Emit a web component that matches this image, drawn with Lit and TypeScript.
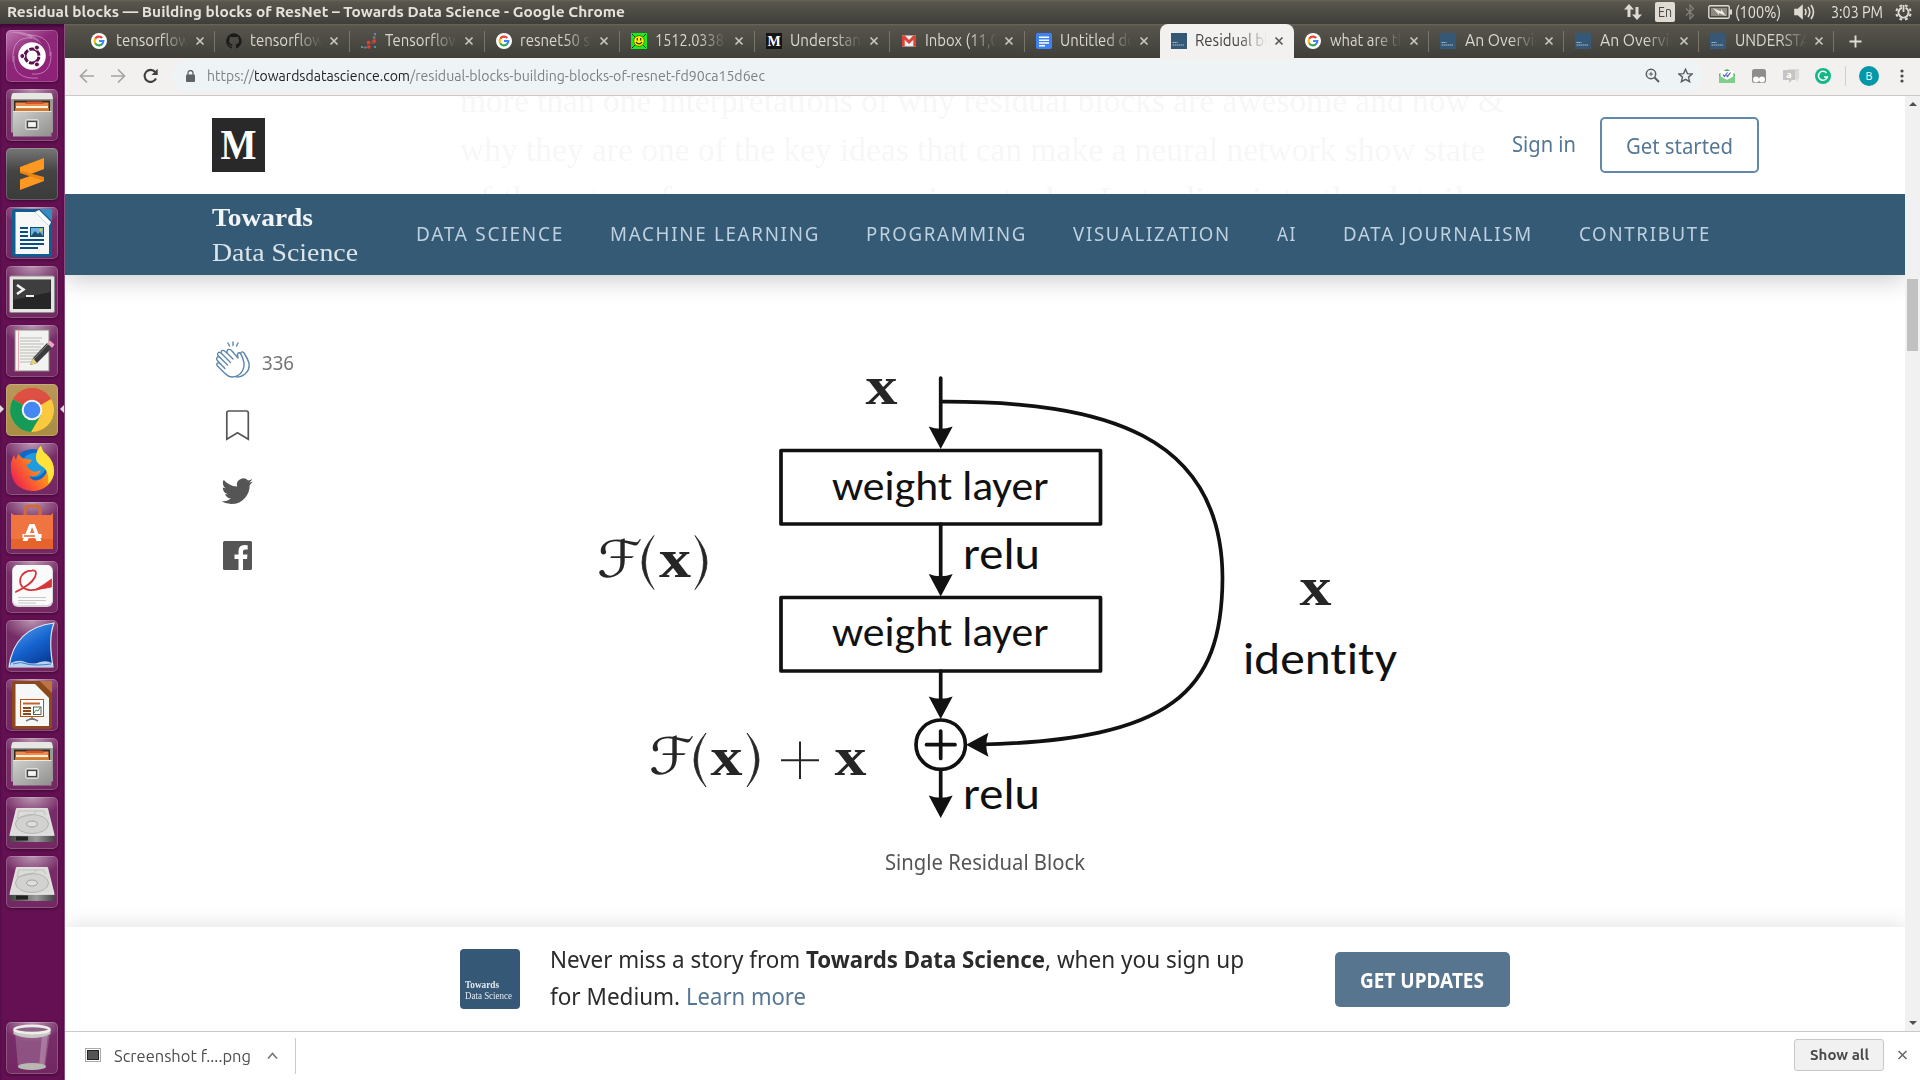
import { LitElement, html, css, svg, nothing } from "lit";
import { customElement, property } from "lit/decorators.js";

/** Single line of text condensed or expanded to a given advance width. */
@customElement("fit-text")
class FitText extends LitElement {
  @property({ type: Number }) w = 0;
  static styles = css`
    :host { display: inline-block; white-space: pre; flex: none; }
    .t { display: inline-block; transform-origin: 0 50%; white-space: pre; }
  `;
  render() {
    return html`<span class="t"><slot></slot></span>`;
  }
  firstUpdated() {
    const t = this.renderRoot.querySelector(".t") as HTMLElement;
    const n = t.offsetWidth ? t.getBoundingClientRect().width : this.w;
    this.style.width = this.w + "px";
    t.style.transform = `scaleX(${this.w / n})`;
  }
}

const fit = (text: string, w: number, cls = "") => html`<fit-text class=${cls} .w=${w}>${text}</fit-text>`;

const google = svg`<circle cx="8" cy="8" r="8" fill="#fff"/>
  <g fill="none" stroke-width="2.1"><path d="M4.2 5.8A4.4 4.4 0 0 1 11.2 5" stroke="#ea4335"/><path d="M4.3 10.4A4.6 4.6 0 0 1 4.3 5.6" stroke="#fbbc05"/><path d="M11.2 11A4.4 4.4 0 0 1 4.2 10.2" stroke="#34a853"/><path d="M8 8h4.4A4.4 4.4 0 0 1 10.9 11.2" stroke="#4285f4"/></g>`;
const tds = svg`<rect width="16" height="16" fill="#355876"/><path d="M1.5 9.5h5M1.5 12h12" stroke="#a9bccb" stroke-width="1" stroke-dasharray="1.6 .4"/>`;
const favicons: Record<string, unknown> = {
  google, tds,
  github: svg`<path fill="#1b1b1b" d="M8 .3a7.8 7.8 0 0 0-2.5 15.2c.4.1.5-.2.5-.4v-1.5c-2.1.5-2.6-.9-2.6-.9-.4-.9-.9-1.1-.9-1.1-.7-.5.1-.5.1-.5.8.1 1.2.8 1.2.8.7 1.2 1.8.8 2.3.6.1-.5.3-.8.5-1-1.7-.2-3.5-.9-3.5-3.9 0-.8.3-1.5.8-2.1-.1-.2-.4-1 .1-2.1 0 0 .6-.2 2.1.8a7.500 7.500 0 0 1 3.900 0c1.500-1 2.100-.8 2.100-.8.4 1.100.2 1.900.1 2.100.5.6.8 1.200.8 2.100 0 3-1.800 3.700-3.500 3.900.3.2.5.7.5 1.400v2.100c0 .2.1.5.5.4A7.800 7.800 0 0 0 8 .3z"/>`,
  mol: svg`<path d="M1 14.500h6M7 14v-4h7M14 10V1" stroke="#8a5650" stroke-width="1" fill="none"/><g fill="#e2412e"><circle cx="7.500" cy="9.500" r="1.800"/><circle cx="13" cy="8" r="1.800"/><circle cx="8" cy="14" r="1.700"/></g><g fill="#5e8ea3"><rect y="13" width="2" height="2"/><rect x="3.500" y="13.500" width="2" height="2"/><rect x="13" width="2" height="2"/><rect x="12" y="3.500" width="2" height="2"/><rect x="13" y="13" width="2" height="2"/></g>`,
  smile: svg`<rect width="16" height="16" fill="#10f01c"/><circle cx="8" cy="8" r="5.300" fill="#ffec00" stroke="#5c5c00" stroke-width=".8"/><path d="M6.300 5v2.500M9.700 5v2.500M5 9.200q3 3.500 6 0" stroke="#222" stroke-width="1.200" fill="none"/><path d="M1 1l3 3M15 1l-3 3M1 15l3-3M15 15l-3-3" stroke="#222"/>`,
  medium: svg`<rect width="16" height="16" fill="#141414"/><text x="8" y="13" text-anchor="middle" font-family="Liberation Serif, serif" font-weight="700" font-size="14" fill="#fff">M</text>`,
  gmail: svg`<path d="M1 2.500h14v11H1z" fill="#eee"/><path d="M1 13.500v-11h2.800L8 7l4.200-4.500H15v11h-2.700V6.800L8 11 3.700 6.800v6.700z" fill="#db4437"/>`,
  docs: svg`<rect width="16" height="16" rx="2" fill="#3f82f5"/><path d="M3 4.200h10M3 7.200h10M3 10h10M3 12.800h6" stroke="#fff" stroke-width="1.500"/>`,
};

interface Tab { icon: string; label: string; w: number; active?: boolean }
const tabs: Tab[] = [
  { icon: "google", label: "tensorflow", w: 74 },
  { icon: "github", label: "tensorflow", w: 74 },
  { icon: "mol", label: "Tensorflow", w: 75 },
  { icon: "google", label: "resnet50 s", w: 70 },
  { icon: "smile", label: "1512.03385", w: 77 },
  { icon: "medium", label: "Understan", w: 71 },
  { icon: "gmail", label: "Inbox (11,0", w: 74 },
  { icon: "docs", label: "Untitled do", w: 76 },
  { icon: "tds", label: "Residual bl", w: 73, active: true },
  { icon: "google", label: "what are th", w: 76 },
  { icon: "tds", label: "An Overvie", w: 78 },
  { icon: "tds", label: "An Overvie", w: 78 },
  { icon: "tds", label: "UNDERSTA", w: 75 },
];

const files = svg`
  <path d="M6 5.500q0-1.500 1.500-1.500h37q1.500 0 1.500 1.500l1 5v33H5v-33z" fill="#9a9a96"/><path d="M6 5l1.500-1h37L46 5l1 5H5z" fill="#e6e6e3"/>
  <path d="M8 11.500h36V22H8z" fill="#3a2a22"/><path d="M9.500 13.500h33V22h-33z" fill="#f08a4b"/><path d="M21 12.500h15l2 2.500H19z" fill="#d2552a"/><path d="M10 17h32v2H10z" fill="#fff2e0"/><path d="M9 19.500h34V22H9z" fill="#cf7a2c"/>
  <path d="M7 22h38.500v25.500H7z" fill="url(#gFile)"/><path d="M7 22.500h38.500" stroke="#e8e8e8"/>
  <rect x="19.500" y="30.500" width="13" height="10" rx="1.500" fill="#b3b3b0" stroke="#dcdcda"/><rect x="21.500" y="32.500" width="9" height="6" fill="#f4f4f4" stroke="#444" stroke-width="1.200"/>`;
const disk = svg`
  <path d="M10.500 11.500h31L48 37.500H4z" fill="#dcdcda" stroke="#f1f1ef" stroke-width=".8"/>
  <ellipse cx="26" cy="27" rx="16.500" ry="9.500" fill="#d2d2d0" stroke="#aaaaa7" stroke-width=".8"/><ellipse cx="26" cy="27" rx="5.500" ry="3" fill="#dededc" stroke="#a2a2a0"/>
  <path d="M12.500 14h25l2 4M13 14l-2 7 15-3 5-4" fill="none" stroke="#b4b4b1" stroke-width=".7"/>
  <path d="M3.500 38h45v6q0 1-1 1h-43q-1 0-1-1z" fill="url(#gDisk)"/><path d="M3.500 38.300h45" stroke="#eee"/><rect x="10" y="39.500" width="12" height="4" fill="#222"/>`;
const launcher: { bg?: string; art: unknown; on?: boolean }[] = [
  { bg: "dash", art: svg`<g fill="none" stroke="#e9b9df" opacity=".55"><path d="M26 8Q5 6 7 32M26 44Q46 46 45 22M44 26Q46 5 22 5M8 26Q6 50 32 48"/></g><path d="M4 2Q26 0 36 14 20 4 4 2z" fill="#fff" opacity=".25"/>
     <circle cx="26" cy="26" r="13.800" fill="#fff"/><circle cx="26" cy="26" r="7" fill="none" stroke="#5d1150" stroke-width="3" stroke-dasharray="13.200 1.460" transform="rotate(6 26 26)"/>
     <g fill="#5d1150" stroke="#fff" stroke-width="1"><circle cx="16.300" cy="26" r="2.500"/><circle cx="30.900" cy="17.600" r="2.500"/><circle cx="30.900" cy="34.400" r="2.500"/></g>` },
  { art: files },
  { bg: "dark", art: svg`<path d="M38 10v11l-13 5 13 3.500V33L14 42V31.500L27 27l-13-4V19z" fill="#ff9820"/><path d="M14 22.500L38 29v4l-24-8z" fill="#ea860f"/>` },
  { art: svg`<path d="M8 2h26l12 12v33q0 3-3 3H9q-3 0-3-3V5q0-3 2-3z" fill="#0d5f92"/><path d="M34 2h12v12z" fill="#2f8fc4"/><path d="M9.500 5H29l14 14v28H9.500z" fill="#f7f7f7"/><path d="M29 5l14 14 2-4L33 3z" fill="#fff"/>
     <path d="M14 21h8M14 25h8M14 29h8M14 33h24M14 37h24M14 41h18" stroke="#0a4f7c" stroke-width="1.800"/><rect x="24.500" y="20.500" width="13" height="9" fill="#6db5dd" stroke="#0a4f7c"/><path d="M25 29l4-5 3 3 2-2 3 4z" fill="#24506c"/><circle cx="35" cy="23" r="1.500" fill="#f5c52f"/>` },
  { art: svg`<rect x="3.500" y="10" width="45" height="36.500" rx="1.500" fill="#e4e4e2" stroke="#8d8d8d"/><rect x="7" y="13.500" width="38" height="29.500" fill="#262626"/><path d="M7.500 14h37v12l-37 8z" fill="#3e3e3e"/><path d="M11 19l6.500 4.500L11 28" fill="none" stroke="#f2f2f2" stroke-width="2.600"/><path d="M20 30h8" stroke="#f2f2f2" stroke-width="2"/>` },
  { art: svg`<rect x="9" y="5" width="34" height="41" fill="#f2f2f0" stroke="#8a8a86"/><path d="M14 13h22M14 16h20M14 19h24M14 22h21M14 25h23M14 28h19M14 31h20M14 34h16M14 37h12" stroke="#b9b9b6" stroke-width="1"/><path d="M12.500 5v41" stroke="#eaa"/>
     <path d="M24 40l3-7L41 18l5 5-15 15z" fill="#3c3c3c"/><path d="M24 40l3-7 4 5z" fill="#e9d27c"/><path d="M41 18l3-2.500 4.500 4L46 23z" fill="#eda4c4"/><path d="M28 34L42 19" stroke="#8b8b8b"/>` },
  { bg: "gold", on: true, art: svg`<circle cx="26" cy="26" r="22" fill="#fbc93d"/><path d="M26 26L7 15A22 22 0 0 1 45 15z" fill="#e04b3d"/><path d="M7 15A22 22 0 0 0 25 48L35 31z" fill="#169a58"/><path d="M7 15A22 22 0 0 1 45 15H26z" fill="#dd5144"/><circle cx="26" cy="26" r="10.300" fill="#f4f4f4"/><circle cx="26" cy="26" r="8.300" fill="#4587f3"/>` },
  { art: svg`<circle cx="27" cy="26" r="20" fill="#1467c4"/><circle cx="28" cy="22" r="12" fill="#1f9be0"/><path d="M30 14Q31 6 35 3q1 5 5 8 8 7 8 17a21 20 0 0 1-22 20Q6 46 5 27q-1-9 3-15l2 5q1-5 3-6 2 5 8 5l5 1q-2 4-6 5 2 4 6 6 4 2 9-1-3 8-12 6 4 7 12 3 8-5 6-15-2-6-7-7z" fill="url(#gFox)"/><path d="M35 3q1 5 5 8 8 7 8 17 0 8-6 13 2-14-8-19-5-4-4-9 1-7 5-10z" fill="#ffe33b"/>` },
  { art: svg`<path d="M19 17V9q0-5 4-5h7q4 0 4 5v8" fill="none" stroke="#cf6a3b" stroke-width="3"/><path d="M5 11l3 2h37l2-2v36H5z" fill="#ef7440"/><path d="M5 37h42v10H5z" fill="#e6632c"/><path d="M23.500 22h5l7 17h-5l-1.500-3.500h-6L21.500 39h-5z" fill="#fff"/><path d="M24 31l2-6 2.500 6z" fill="#ef7440"/><path d="M16.500 32h19v4h-19z" fill="#fff"/><path d="M18 34h11" stroke="#e6632c" stroke-width="1.500"/>` },
  { art: svg`<rect x="6" y="4" width="41" height="42" rx="6" fill="#d8d8d6"/><rect x="7" y="4" width="39" height="40" rx="5" fill="#fafafa"/><path d="M9.500 31Q25 24 29 16 32 9 26 9.500 17 10 14.500 17 12.500 27 23 29 34 30 45 22" fill="none" stroke="#d3353a" stroke-width="1.800"/><path d="M9 31.500Q14 29 18 26.500M30 28Q38 24 45.500 18v8Q38 28 30 28z" fill="#d6353a" stroke="#d6353a" stroke-width=".8"/><path d="M12 36.500h28M12 39.500h28M12 42h18" stroke="#c2c2c2" stroke-width=".9"/>` },
  { art: svg`<path d="M48 3Q42 18 47 47H3Q8 8 48 3z" fill="url(#gFin)" stroke="#dce8f5" stroke-width="1.200"/><path d="M5 43q8-4 14-1 8 3 15 0 7-2 12 1v4H3.500z" fill="#b9d2ef"/><path d="M7 44q8-3 14 0 8 2 24 0" fill="none" stroke="#3f7bc4"/>` },
  { art: svg`<path d="M8 2h26l12 12v33q0 3-3 3H9q-3 0-3-3V5q0-3 2-3z" fill="#8c4a1c"/><path d="M34 2h12v12z" fill="#bd7440"/><path d="M9.500 5H29l14 14v28H9.500z" fill="#f7f7f7"/><rect x="14.500" y="20.500" width="23" height="17" fill="#fff" stroke="#b25221"/><path d="M17 24.500h17" stroke="#c5622b" stroke-width="2"/><path d="M17 29h8M17 32h8M17 35h8" stroke="#8c4a1c" stroke-width="1.800"/><rect x="27.500" y="28" width="7.500" height="7.500" fill="#fff" stroke="#333" stroke-width=".8"/><path d="M28 34l2-3 2 1 2.500-4" stroke="#3f9b3a" fill="none"/><path d="M20 42l6-3 6 3M26 38v3" stroke="#777" stroke-width="1.500" fill="none"/>` },
  { art: files },
  { art: disk },
  { art: disk },
];
const trash = svg`<path d="M9 10h35l-5 36H12z" fill="#a77aa0" opacity=".5"/><path d="M36 12h6l-4 33h-5z" fill="#d9c1d5" opacity=".35"/><ellipse cx="26" cy="44.500" rx="14" ry="3.600" fill="#b9b9b4"/><path d="M7.500 8v4q8 4 18.500 4t18.500-4V8z" fill="#c9c9c4"/><ellipse cx="26" cy="7.500" rx="17.500" ry="3.600" fill="#8d6387" stroke="#eeeeea" stroke-width="2.600"/>`;

@customElement("app-root")
class AppRoot extends LitElement {
  static styles = css`
    :host { display: block; width: 1920px; height: 1080px; overflow: hidden; background: #fff; --ui: Ubuntu, "Noto Sans", "Open Sans", sans-serif; --page: "Noto Sans", "Open Sans", sans-serif; }
    * { box-sizing: border-box; }
    svg { display: block; flex: none; }
    .screen { display: grid; grid-template: 24px 1056px / 65px 1855px; font-family: var(--ui); }
    .title { grid-column: 1 / 3; display: flex; align-items: center; background: linear-gradient(#67645a 0, #58564d 2px, #3f3e39); color: #e5e2da; font-size: 15px; line-height: 22px; padding-left: 7px; }
    .title .name { font-weight: 700; }
    .tray { display: flex; align-items: center; margin-left: 999px; width: 290px; font-size: 16px; }
    .lang { width: 20px; height: 20px; border-radius: 2px; background: #dfdbd2; color: #45443f; font-size: 14px; line-height: 20px; margin: 0 10px 0 13px; display: flex; justify-content: center; }
    .bt { margin-right: 13px; }
    .pct { margin-left: 3px; }
    .snd { margin: 0 15px 0 13px; }
    .gear { margin-left: 12px; }

    .dock { background: #641052; border-right: 1px solid #88507c; padding: 6px 5px 6px 6px; display: flex; flex-direction: column; gap: 7px; box-shadow: inset 0 3px 3px #40093a; }
    .tile { width: 52px; height: 52px; border-radius: 5px; position: relative; flex: none; background: radial-gradient(ellipse 30px 20px at 50% 0, rgba(255,255,255,.5), rgba(255,255,255,0)), linear-gradient(rgba(255,255,255,.13), rgba(255,255,255,.1)); box-shadow: inset 0 0 0 1px rgba(255,255,255,.2), 0 1px 3px rgba(0,0,0,.4); }
    .tile.dash { background: linear-gradient(145deg, #c27ab4, #8d2878 40%, #8f1f79); }
    .tile.dark { background: linear-gradient(#777, #444 45%, #3b3b3b); }
    .tile.gold { background: linear-gradient(#b9975a, #a98d42); }
    .pip { position: absolute; top: 21px; width: 0; height: 0; border: 4.500px solid transparent; }
    .pip.l { left: -6px; border-left-color: #ddd; border-right: 0; }
    .pip.r { right: -6px; border-right-color: #ddd; border-left: 0; }
    .grow { flex: 1; }

    .win { display: flex; flex-direction: column; min-width: 0; }
    .strip { height: 34px; flex: none; background: linear-gradient(#6a675c 0, #57554c 2px, #3f3e39); display: flex; padding-left: 15px; }
    .tab { width: 134.940px; flex: none; display: flex; align-items: center; padding-left: 11px; position: relative; color: #dad7cf; font-size: 16px; line-height: 22px; }
    .tab::after { content: ""; position: absolute; right: 0; top: 7px; width: 1px; height: 21px; background: #77746a; }
    .tab.active { background: #f3f1f0; border-radius: 8px 8px 0 0; color: #45433f; }
    .tab.active::after, .tab.before::after { display: none; }
    .lab { width: 72px; overflow: hidden; margin-left: 8.500px; height: 24px; padding-top: 0; -webkit-mask-image: linear-gradient(90deg, #000 62%, transparent 100%); mask-image: linear-gradient(90deg, #000 62%, transparent 100%); }
    .x { margin-left: 7px; }
    .plus { margin: 11px 0 0 15px; }

    .bar { height: 38px; flex: none; background: #f2f1ef; border-bottom: 1px solid #cbcac8; display: flex; align-items: center; padding: 0 0 2px 14px; color: #777; }
    .nav { display: flex; gap: 15px; }
    .omni { margin-left: 13px; width: 1530px; height: 30px; border-radius: 15px; background: #eef3f5; display: flex; align-items: center; padding-left: 14px; font-size: 15px; line-height: 22px; color: #7b8084; }
    .lock { margin-right: 12px; }
    .dom { color: #202124; }
    .omni .ic { margin-left: 880px; display: flex; gap: 18px; }
    .exts { display: flex; align-items: center; margin-left: 17px; }
    .exts > svg { margin-right: 16px; }
    .sep { width: 1px; height: 20px; background: #cfcfcd; margin-right: 13px; margin-left: -2px; }
    .me { width: 20px; height: 20px; border-radius: 10px; background: #0497a7; color: #fff; font-size: 11px; line-height: 20px; text-align: center; margin-right: 21px; }

    .view { display: flex; height: 935px; flex: none; }
    .page { width: 1840px; position: relative; overflow: hidden; background: #fff; font-family: var(--page); }
    .scroll { width: 15px; background: #f1f1f1; display: flex; flex-direction: column; align-items: center; }
    .up, .down { width: 0; height: 0; border: 4px solid transparent; }
    .up { border-bottom-color: #505050; border-top: 0; margin-top: 6px; }
    .down { border-top-color: #505050; border-bottom: 0; margin: auto 0 6px; }
    .thumb { width: 11px; height: 72px; background: #c1c1c1; margin-top: 173px; }

    .article { padding-left: 395px; color: #f7f7f7; font-family: "Liberation Serif", serif; font-size: 33.500px; line-height: 49px; height: 147px; margin-top: -20px; display: flex; flex-direction: column; }
    .art { display: block; }
    .head { position: absolute; left: 0; top: 0; width: 1840px; }
    .top { height: 98px; display: flex; align-items: flex-start; padding: 21px 0 0 147px; color: #557795; font-size: 21px; line-height: 28px; }
    .m { width: 53px; height: 54px; margin-top: 1px; }
    .sign { margin: 13px 0 0 1247px; }
    .start { margin-left: 24px; width: 159px; height: 56px; border: 2px solid #6489a8; border-radius: 5px; padding: 13px 0 0 24px; }
    .cats { height: 81px; background: #355a75; display: flex; padding-left: 147px; color: #bfd0df; font-size: 19.800px; line-height: 28px; box-shadow: 0 4px 24px rgba(0,0,0,.22); clip-path: inset(0 0 -40px 0); }
    .brand { width: 204px; font-family: "Liberation Serif", serif; color: #f2f5f8; padding-top: 7px; font-size: 26px; line-height: 34.500px; display: flex; flex-direction: column; align-items: flex-start; }
    .brand .b { font-weight: 700; }
    .brand .d { color: #dbe4eb; }
    .cat { margin: 26px 46px 0 0; letter-spacing: 1.800px; }
    .share { position: absolute; left: 149px; top: 244px; display: flex; flex-direction: column; color: #757575; font-size: 20px; }
    .claps { display: flex; align-items: center; gap: 11px; height: 40px; }
    .num { padding-top: 5px; }
    .figure { padding-left: 520px; margin-top: 127px; }
    .fig { font-family: Carlito, Lato, sans-serif; font-variant-ligatures: none; }
    .cap { margin-top: 18px; padding-left: 300px; font-size: 21px; line-height: 28px; color: #555; display: block; }
    .promo { position: absolute; left: 0; bottom: 0; width: 1840px; height: 104px; background: #fff; box-shadow: 0 -2px 20px rgba(0,0,0,.12); display: flex; padding: 22px 0 0 395px; }
    .logo { width: 60px; height: 60px; background: #355876; border-radius: 4px; font-family: "Liberation Serif", serif; color: #e4eaf0; font-size: 10px; line-height: 11px; padding: 30px 0 0 5px; }
    .logo .b { font-weight: 700; }
    .msg { margin: -8px 0 0 30px; width: 785px; font-size: 23.500px; line-height: 37px; color: #2b2b2b; }
    .msg b { font-weight: 700; }
    .learn { color: #557795; }
    .row { display: flex; }
    .btn { margin-top: 3px; width: 175px; height: 55px; border-radius: 5px; background: #58758f; color: #fff; font-size: 20.500px; font-weight: 700; line-height: 28px; padding: 14px 0 0 25px; }

    .dl { height: 49px; border-top: 1px solid #c9c9c9; background: #fff; display: flex; align-items: flex-start; padding: 6px 12px 0 20px; color: #4e4e4e; font-size: 16.500px; line-height: 24px; flex: none; }
    .shot { margin-top: 6px; }
    .dlsep { width: 1px; height: 36px; background: #cacaca; margin-left: 2px; }
    .show { margin: 1px 13px 0 auto; width: 90px; height: 32px; border: 1px solid #c8c8c8; border-radius: 3px; background: #f1f1f1; font-weight: 600; font-size: 15px; padding: 3px 0 0 15px; color: #4a4a4a; line-height: 23px; }
  `;

  private figure() {
    const s = "#111";
    const t = (x: number, y: number, w: number, size: number, text: string) =>
      svg`<text x=${x} y=${y} font-size=${size} textLength=${w} lengthAdjust="spacingAndGlyphs">${text}</text>`;
    const mx = (x: number, y: number) =>
      svg`<text x=${x} y=${y} font-family="Liberation Serif, serif" font-weight="700" font-size="54" textLength="32" lengthAdjust="spacingAndGlyphs" fill="#262626">x</text>`;
    const fx = (x: number, y: number) => svg`
      <text x=${x} y=${y} font-family="DejaVu Sans, DejaVu Serif, serif" font-size="51" textLength="46" lengthAdjust="spacingAndGlyphs" fill="#262626">ℱ</text>
      <path d="M${x + 57} ${y - 41}q-24 27 0 54q-17 -27 0 -54zM${x + 98} ${y - 41}q24 27 0 54q17 -27 0 -54z" fill="#262626" stroke="#262626" stroke-width=".8"/>`;
    return html`<svg class="fig" width="860" height="480" viewBox="585 350 860 480" fill=${s}>
      <g fill="none" stroke=${s} stroke-width="3.700" stroke-linejoin="round">
        <rect x="781" y="450.500" width="319.500" height="73.500"/><rect x="781" y="597.500" width="319.500" height="73.500"/>
        <path d="M940.700 378v58M940.700 524v55M940.700 671v32M940.700 770v32" stroke-linecap="round"/>
        <path d="M941 401.700C1105 401 1222 435 1222.500 578C1222 692 1172 740 980 744.500"/>
        <circle cx="940.700" cy="744.700" r="24.700"/><path d="M926.500 744.700h28.500M940.700 731v27.500" stroke-linecap="round"/>
      </g>
      ${[449, 596.5, 719, 818].map((y) => svg`<path d="M940.700 ${y}l-12 -22.500q12 4.500 24 0z"/>`)}
      <path d="M966 744.700l22.500 -12q-4.500 12 0 24z"/>
      ${t(832, 499.500, 216.500, 41, "weight layer")}${t(832, 646.300, 216.500, 41, "weight layer")}
      ${t(963, 568.500, 77, 45, "relu")}${t(963, 808.500, 77, 45, "relu")}${t(1243, 673.500, 154, 45, "identity")}
      ${mx(865.500, 404)}${mx(1299.500, 604.500)}${mx(659, 577)}${mx(710.500, 774.500)}${mx(834.500, 774.500)}
      ${fx(597, 576.500)}${fx(649, 774)}
      <path d="M781 760.300h38M800 741.500v37.500" stroke="#262626" stroke-width="2"/>
    </svg>`;
  }

  render() {
    const x = (c: string) => html`<svg class="x" width="10" height="10" viewBox="0 0 10 10"><path d="M1.500 1.500l7 7M8.500 1.500l-7 7" stroke=${c} stroke-width="1.700"/></svg>`;
    return html`<div class="screen">
      <div class="title">
        ${fit("Residual blocks — Building blocks of ResNet – Towards Data Science - Google Chrome", 618, "name")}
        <div class="tray">
          <svg width="18" height="18" viewBox="0 0 18 18" fill="#dfdbd2"><path d="M5 1l5 5.500H6.500V14h-3V6.500H0zM13 17l-5-5.500h3.500V4h3v7.500H18z"/></svg>
          <span class="lang">${fit("En", 14)}</span>
          <svg class="bt" width="10" height="16" viewBox="0 0 10 16" fill="none" stroke="#85827a" stroke-width="1.200"><path d="M1 4.500l7.500 7L5 15V1l3.500 3.500L1 11.500"/></svg>
          <svg width="24" height="14" viewBox="0 0 24 14"><rect x=".8" y=".8" width="20.400" height="12.400" rx="1.500" fill="none" stroke="#dfdbd2" stroke-width="1.400"/><rect x="3" y="3" width="16" height="8" fill="#8d8a82"/><path d="M22 4.500h2v5h-2z" fill="#dfdbd2"/><path d="M5 3l8 3.500V4l5 7-7-3v2z" fill="#efece5"/></svg>
          ${fit("(100%)", 46, "pct")}
          <svg class="snd" width="22" height="16" viewBox="0 0 22 16" fill="none" stroke="#dfdbd2" stroke-width="1.600"><path d="M1 5.500h3L8 2v12l-4-3.500H1z" fill="#dfdbd2"/><path d="M11 5q2 3 0 6M14 3q3.500 5 0 10M17 1q5 7 0 14"/></svg>
          ${fit("3:03 PM", 52)}
          <svg class="gear" width="17" height="17" viewBox="0 0 17 17" fill="none" stroke="#dfdbd2"><circle cx="8.500" cy="8.500" r="5" stroke-width="2" stroke-dasharray="27 4.400" transform="rotate(-65 8.500 8.500)"/><circle cx="8.500" cy="8.500" r="7.200" stroke-width="2" stroke-dasharray="2.800 2.855" transform="rotate(10 8.500 8.500)"/><path d="M8.500 1v7" stroke-width="1.800"/></svg>
        </div>
      </div>

      <div class="dock">
        ${launcher.map((t) => this.tile(t.art, t.bg, t.on))}
        <div class="grow"></div>${this.tile(trash)}
      </div>

      <div class="win">
        <div class="strip">
          ${tabs.map((t, i) => html`<div class="tab ${t.active ? "active" : ""} ${tabs[i + 1]?.active ? "before" : ""}">
            <svg width="16" height="16" viewBox="0 0 16 16">${favicons[t.icon]}</svg>
            <div class="lab">${fit(t.label, t.w)}</div>${x(t.active ? "#5b5954" : "#c9c6be")}
          </div>`)}
          <svg class="plus" width="13" height="13" viewBox="0 0 13 13"><path d="M6.500 .5v12M.5 6.500h12" stroke="#e0ddd5" stroke-width="1.900"/></svg>
        </div>
        <div class="bar">
          <div class="nav">
            <svg width="16" height="16" viewBox="0 0 16 16" fill="none" stroke="#a5a4a2" stroke-width="1.700"><path d="M15 8H2M8 1.500L1.500 8 8 14.500"/></svg>
            <svg width="16" height="16" viewBox="0 0 16 16" fill="none" stroke="#a5a4a2" stroke-width="1.700"><path d="M1 8h13M8 1.500L14.500 8 8 14.500"/></svg>
            <svg width="18" height="16" viewBox="0 0 18 16" fill="none" stroke="#3f3f3f" stroke-width="2.100"><path d="M15 10.500A6 6 0 1 1 14.200 4"/><path d="M16.700 .8V7h-6.200z" fill="#3f3f3f" stroke="none"/></svg>
          </div>
          <div class="omni">
            <svg class="lock" width="9" height="12" viewBox="0 0 9 12"><rect y="4.500" width="9" height="7.500" rx="1" fill="#5f6368"/><path d="M2 5V3a2.500 2.500 0 0 1 5 0v2" fill="none" stroke="#5f6368" stroke-width="1.300"/></svg>
            ${fit("https://", 47)}${fit("towardsdatascience.com", 156, "dom")}${fit("/residual-blocks-building-blocks-of-resnet-fd90ca15d6ec", 355)}
            <div class="ic">
              <svg width="15" height="15" viewBox="0 0 15 15" fill="none" stroke="#5a5d61"><circle cx="6" cy="6" r="4.700" stroke-width="1.500"/><path d="M9.500 9.500l4.500 4.500" stroke-width="2"/><path d="M6 3.800v4.400M3.800 6h4.400"/></svg>
              <svg width="15" height="15" viewBox="0 0 15 15" fill="none" stroke="#5a5d61" stroke-width="1.400"><path d="M7.500 1.300l1.900 4.300 4.700.4-3.600 3.100 1.100 4.600-4.100-2.400-4.100 2.400 1.100-4.600L.9 6l4.700-.4z"/></svg>
            </div>
          </div>
          <div class="exts">
            <svg width="16" height="16" viewBox="0 0 16 16"><path d="M0 6l8-5 8 5v9H0z" fill="#4faf5b"/><path d="M1.500 3h13v7L8 12 1.500 10z" fill="#fff"/><path d="M0 7.500l8 4.500 8-4.500V15H0z" fill="#7fcf8a"/><path d="M4 6.500l1.500 2 3-4M7.500 7.500l1 1 3-4" fill="none" stroke="#4d58c9" stroke-width="1.200"/></svg>
            <svg width="16" height="16" viewBox="0 0 16 16"><rect x="1" y="1" width="14" height="14" rx="2.500" fill="#8d8d8d"/><circle cx="5" cy="11.500" r="3" fill="#fff"/><circle cx="11" cy="11.500" r="3" fill="#fff"/></svg>
            <svg width="16" height="16" viewBox="0 0 16 16"><path d="M5 1h11v10h-1v3l-3-3H5z" fill="#dadada"/><path d="M0 2h12v10H9l-3 3v-3H0z" fill="#c5c5c5"/><text x="6" y="10" font-size="9" fill="#fff" text-anchor="middle" font-weight="700" font-family="Noto Sans, sans-serif">a</text></svg>
            <svg width="16" height="16" viewBox="0 0 16 16"><circle cx="8" cy="8" r="8" fill="#12b886"/><path d="M11.500 5A4.500 4.500 0 1 0 12.300 9H9" fill="none" stroke="#fff" stroke-width="1.500"/></svg>
            <span class="sep"></span><span class="me">B</span>
            <svg width="4" height="14" viewBox="0 0 4 14" fill="#4a4a4a"><circle cx="2" cy="2" r="1.600"/><circle cx="2" cy="7" r="1.600"/><circle cx="2" cy="12" r="1.600"/></svg>
          </div>
        </div>

        <div class="view">
          <div class="page">
            <div class="article">
              ${fit("more than one interpretations of why residual blocks are awesome and how &", 1044)}
              ${fit("why they are one of the key ideas that can make a neural network show state", 1025)}
              ${fit("of the art performances on various tasks. Lets dive into the details", 1020)}
            </div>
            <div class="head">
              <div class="top">
                <svg class="m" viewBox="0 0 53 54"><rect width="53" height="54" fill="#292929"/><text x="8.500" y="41" textLength="36" lengthAdjust="spacingAndGlyphs" font-family="Liberation Serif, serif" font-weight="700" font-size="43" fill="#fff">M</text></svg>
                ${fit("Sign in", 64, "sign")}
                <div class="start">${fit("Get started", 107)}</div>
              </div>
              <div class="cats">
                <div class="brand">${fit("Towards", 101, "b")}${fit("Data Science", 146, "d")}</div>
                ${([["DATA SCIENCE", 148], ["MACHINE LEARNING", 210], ["PROGRAMMING", 161], ["VISUALIZATION", 158], ["AI", 20], ["DATA JOURNALISM", 190], ["CONTRIBUTE", 132]] as [string, number][]).map(([n, w]) => fit(n, w, "cat"))}
              </div>
            </div>
            <div class="share">
              <div class="claps">
                <svg width="37" height="38" viewBox="0 0 37 38" fill="none" stroke="#5d87ad" stroke-width="1.400" stroke-linecap="round" stroke-linejoin="round"><path d="M14 2l1.500 3M19 1v3.500M24 2l-1.500 3"/>
                <path d="M10.500 32L3.500 25Q2 23 3.500 22 4.800 21.300 6.500 23L3 19Q2 17 3.500 16 5 15.500 6.500 17L4 14.500Q3 12.500 4.500 11.500 6 11 7.500 12.500 6.500 10.500 8 9.500 9.500 9 11 10.500L13 12Q12.500 9 14.500 8.500 16.500 8 18 10L24 17 23.500 13.500Q24 11 26 12 28.500 15 30 22 30.500 29 25.500 33.500 17 39 10.500 32z"/><path d="M6.500 23l4.500 4.500M6.500 17l7 7M7.500 12.500l9 9M13 12l6 6M26.500 12.500q1.500-3 3.500-.5 3.500 5 5 10 1 7-4 11-3.500 3-8.500 3"/></svg>
                ${fit("336", 32, "num")}
              </div>
              <svg width="105" height="200" viewBox="0 0 105 200"><path d="M12.800 33q0-2 2-2h17.500q2 0 2 2v26.300l-10.800-6.500-10.700 6.500z" fill="none" stroke="#555" stroke-width="1.700"/>
                <path transform="translate(7.500 95.500) scale(1.310)" fill="#555" d="M24 4.600c-.9.400-1.800.7-2.800.8 1-.6 1.800-1.600 2.200-2.700-1 .6-2 1-3.100 1.200A4.900 4.900 0 0 0 11.900 8.400C7.800 8.200 4.200 6.200 1.700 3.200a4.900 4.900 0 0 0 1.500 6.600c-.8 0-1.600-.2-2.200-.6v.1c0 2.400 1.700 4.400 3.900 4.800-.7.200-1.500.2-2.200.1.600 2 2.400 3.400 4.600 3.400A9.900 9.900 0 0 1 0 19.600a13.900 13.900 0 0 0 7.500 2.200c9.100 0 14-7.500 14-14v-.6c1-.7 1.800-1.600 2.500-2.600z"/>
                <path transform="translate(9 161)" fill="#555" d="M1.500 0h26Q29 0 29 1.500v26q0 1.500-1.500 1.500H20V18h4l.5-4.500H20v-2.700q0-2.300 2.200-2.300h2.500V4.300L21.500 4q-6 0-6 6v3.500h-4V18h4v11h-14Q0 29 0 27.500v-26Q0 0 1.500 0z"/></svg>
            </div>
            <div class="figure">${this.figure()}<div class="cap">${fit("Single Residual Block", 200)}</div></div>
            <div class="promo">
              <div class="logo"><div class="row">${fit("Towards", 34, "b")}</div><div class="row">${fit("Data Science", 47)}</div></div>
              <div class="msg">
                <div class="row">${fit("Never miss a story from ", 256)}<b>${fit("Towards Data Science", 239)}</b>${fit(", when you sign up", 199)}</div>
                <div class="row">${fit("for Medium. ", 136)}${fit("Learn more", 120, "learn")}</div>
              </div>
              <div class="btn">${fit("GET UPDATES", 124)}</div>
            </div>
          </div>
          <div class="scroll"><div class="up"></div><div class="thumb"></div><div class="down"></div></div>
        </div>

        <div class="dl">
          <svg width="16" height="30" viewBox="0 0 16 30"><rect x=".5" y="10.500" width="15" height="13" fill="#fff" stroke="#aaa"/><rect x="2.500" y="12.500" width="11" height="9" fill="#555" stroke="#222"/></svg>
          <svg width="13" height="10"></svg>${fit("Screenshot f....png", 137, "shot")}
          <svg width="42" height="30" viewBox="0 0 42 30" ><path d="M17 20.500l4.500-5 4.500 5" fill="none" stroke="#777" stroke-width="1.700"/></svg>
          <span class="dlsep"></span>
          <div class="show">${fit("Show all", 59)}</div>
          <svg width="11" height="30" viewBox="0 0 11 30"><path d="M1.500 13l8 8M9.500 13l-8 8" stroke="#666" stroke-width="1.500"/></svg>
        </div>
      </div>
    </div>`;
  }

  private tile(art: unknown, bg = "", on = false) {
    return html`<div class="tile ${bg}">
      <svg width="52" height="52" viewBox="0 0 52 52">
        <defs>
          <linearGradient id="gFile" x2="1" y2="1"><stop stop-color="#d0d0ce"/><stop offset="1" stop-color="#8f8f8d"/></linearGradient>
          <linearGradient id="gDisk"><stop stop-color="#444"/><stop offset=".6" stop-color="#999"/><stop offset="1" stop-color="#444"/></linearGradient>
          <linearGradient id="gFin" x2=".6" y2="1"><stop stop-color="#63a7f0"/><stop offset=".6" stop-color="#1563cf"/><stop offset="1" stop-color="#0a3f9c"/></linearGradient>
          <linearGradient id="gFox" x1="1" x2="0" y2=".7"><stop stop-color="#ffd633"/><stop offset=".5" stop-color="#ff8a1c"/><stop offset="1" stop-color="#f0254d"/></linearGradient>
        </defs>${art}
      </svg>
      ${on ? html`<span class="pip l"></span><span class="pip r"></span>` : nothing}
    </div>`;
  }
}
